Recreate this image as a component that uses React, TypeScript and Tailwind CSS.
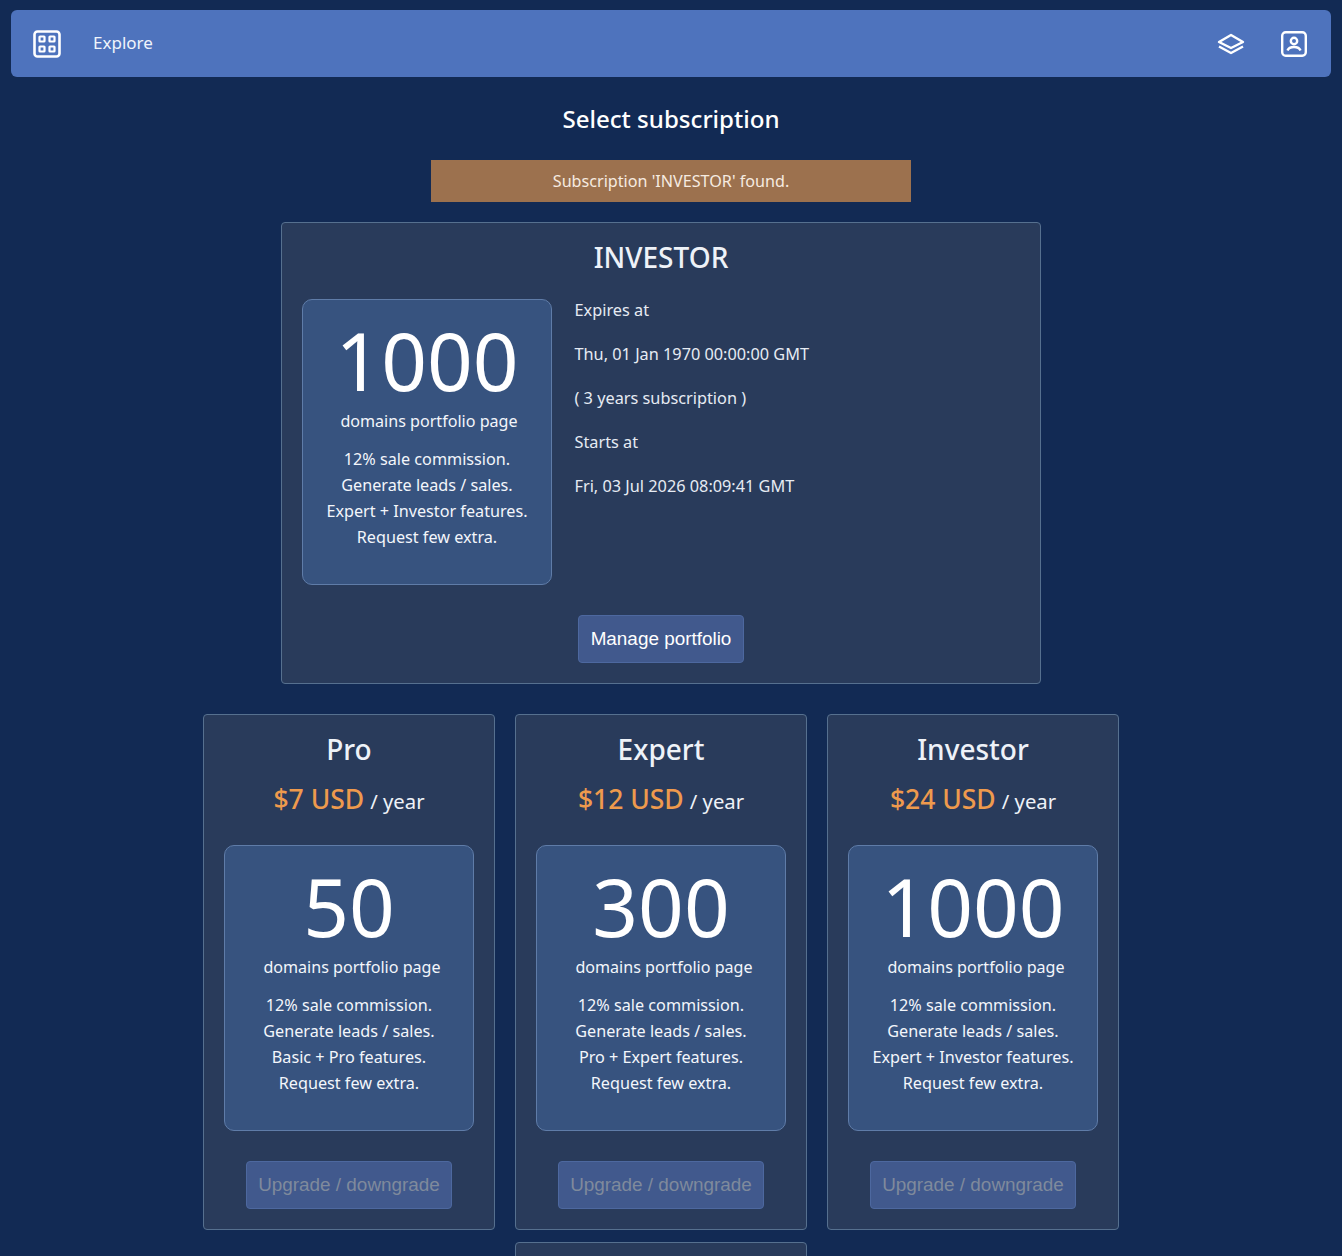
const sans = "font-['Noto_Sans','Open_Sans',sans-serif]";

function Feature({ count, lines, labelClass }: { count: string; lines: string[]; labelClass: string }) {
  return (
    <div className="w-[250px] h-[286px] shrink-0 rounded-[10px] border border-[#5f7ca8] bg-[#37537f] flex flex-col items-center text-white">
      <div className="h-[103px] pt-[17px] text-[80px] leading-[86px]">{count}</div>
      <div className={`mt-[7px] text-[16.1px] leading-[22px] text-[#f3f6fb] ${labelClass}`}>domains portfolio page</div>
      <div className="mt-[14px] text-center text-[16.2px] leading-[26px] text-[#f3f6fb]">
        {lines.map((l) => (
          <div key={l}>{l}</div>
        ))}
      </div>
    </div>
  );
}

function Plan({ name, price, count, features }: { name: string; price: string; count: string; features: string }) {
  return (
    <div className="w-[292px] h-[516px] rounded-[4px] border border-[#56708f] bg-[#293b5b] flex flex-col items-center pt-[15px]">
      <div className="text-[28px] leading-[38px] font-medium text-[#eef2f8]">{name}</div>
      <div className="mt-[12px] h-[40px] flex items-baseline gap-[6px]">
        <span className="text-[26.5px] leading-[38px] font-medium text-[#ee9a4d]">{price}</span>
        <span className="text-[20.3px] leading-[30px] text-[#eef2f8]">/ year</span>
      </div>
      <div className="mt-[25px]">
        <Feature labelClass="pl-[6px]" count={count} lines={["12% sale commission.", "Generate leads / sales.", features, "Request few extra."]} />
      </div>
      <button className="mt-[30px] h-[48px] w-[206px] rounded-[4px] border border-[#4d689f] bg-[#41598d] text-[18.9px] text-[#7f8a9c] font-['Liberation_Sans',sans-serif]">
        Upgrade / downgrade
      </button>
    </div>
  );
}

function GridIcon() {
  return (
    <svg width="28" height="28" viewBox="0 0 28 28" fill="none" stroke="white" strokeWidth="2.6">
      <rect x="1.5" y="1.5" width="25" height="25" rx="3" />
      <rect x="6.5" y="6.5" width="5" height="5" rx="0.5" strokeWidth="2.2" />
      <rect x="16.5" y="6.5" width="5" height="5" rx="0.5" strokeWidth="2.2" />
      <rect x="6.5" y="16.5" width="5" height="5" rx="0.5" strokeWidth="2.2" />
      <rect x="16.5" y="16.5" width="5" height="5" rx="0.5" strokeWidth="2.2" />
    </svg>
  );
}

function LayersIcon() {
  return (
    <svg width="28" height="22" viewBox="0 0 28 22" fill="none" stroke="white" strokeWidth="2.4" strokeLinejoin="round">
      <path d="M14 2 L26 9 L14 15 L2 9 Z" />
      <path d="M2 13.5 L14 20 L26 13.5" />
    </svg>
  );
}

function UserIcon() {
  return (
    <svg width="26" height="26" viewBox="0 0 26 26" fill="none" stroke="white" strokeWidth="2.4">
      <rect x="1.2" y="1.2" width="23.6" height="23.6" rx="3.5" />
      <circle cx="13" cy="10" r="3.2" />
      <path d="M6.5 19.5 C7.5 16.8 10 16 13 16 C16 16 18.5 16.8 19.5 19.5" />
    </svg>
  );
}

export default function App() {
  return (
    <div className={`${sans} relative h-[1256px] overflow-hidden bg-[#122a54] pt-[10px] px-[11px]`}>
      <header className="h-[67px] rounded-[6px] bg-[#4e73bd] flex items-center pl-[22px] pr-[24px] text-white">
        <GridIcon />
        <span className="ml-[32px] pb-[2px] text-[17px] text-[#f0f4fb]">Explore</span>
        <div className="ml-auto flex items-center gap-[36px]">
          <LayersIcon />
          <UserIcon />
        </div>
      </header>

      <h1 className="mt-[25px] text-center text-[24.1px] leading-[34px] font-medium text-white">Select subscription</h1>

      <div className="mx-auto mt-[24px] w-[480px] h-[42px] bg-[#9c714e] flex items-center justify-center text-[16.15px] text-[#f6ebe0]">
        Subscription 'INVESTOR' found.
      </div>

      <div className="pr-[20px] mt-[20px] -ml-[11px] -mr-[11px]">
        <div className="mx-auto w-[760px] h-[462px] rounded-[4px] border border-[#56708f] bg-[#293b5b] pt-[15px] px-[20px] flex flex-col">
          <div className="text-center text-[28px] leading-[38px] font-medium text-[#eef2f8]">INVESTOR</div>
          <div className="mt-[23px] flex">
            <Feature labelClass="pl-1" count="1000" lines={["12% sale commission.", "Generate leads / sales.", "Expert + Investor features.", "Request few extra."]} />
            <div className="ml-[22.5px] text-[16.3px] leading-[22px] text-[#e6ebf3] flex flex-col gap-[22px]">
              <div>Expires at</div>
              <div>Thu, 01 Jan 1970 00:00:00 GMT</div>
              <div>( 3 years subscription )</div>
              <div>Starts at</div>
              <div>Fri, 03 Jul 2026 08:09:41 GMT</div>
            </div>
          </div>
          <button className="mx-auto mt-[30px] h-[48px] w-[166px] rounded-[4px] border border-[#4d689f] bg-[#41598d] text-[18.9px] font-medium text-white font-['Liberation_Sans',sans-serif]">
            Manage portfolio
          </button>
        </div>

        <div className="mx-auto mt-[30px] w-[916px] flex flex-wrap justify-center gap-x-[20px] gap-y-[12px]">
          <Plan name="Pro" price="$7 USD" count="50" features="Basic + Pro features." />
          <Plan name="Expert" price="$12 USD" count="300" features="Pro + Expert features." />
          <Plan name="Investor" price="$24 USD" count="1000" features="Expert + Investor features." />
          <Plan name="Business" price="$48 USD" count="5000" features="Investor + Business features." />
        </div>
      </div>
    </div>
  );
}
